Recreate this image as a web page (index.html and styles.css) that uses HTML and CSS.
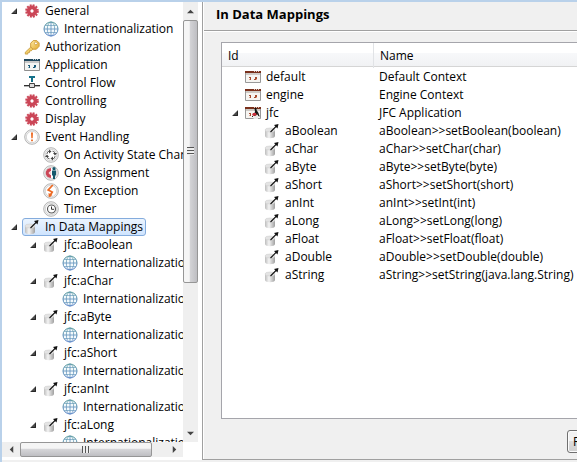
FILE: index.html
```
<!DOCTYPE html>
<html lang="en">
<head>
<meta charset="utf-8">
<title>In Data Mappings</title>
<link rel="stylesheet" href="styles.css">
</head>
<body>
<svg class="sprite" aria-hidden="true">
  <defs>
    <linearGradient id="globe-line" x1="0" y1="0" x2="0" y2="1"><stop offset="0" stop-color="#55979c"/><stop offset="1" stop-color="#5a84c8"/></linearGradient>
    <linearGradient id="metal" x1="0" y1="0" x2="1" y2="0"><stop offset="0" stop-color="#bdbdbd"/><stop offset=".4" stop-color="#f4f4f4"/><stop offset="1" stop-color="#a0a0a0"/></linearGradient>
    <linearGradient id="gold" x1="0" y1="0" x2="1" y2="1"><stop offset="0" stop-color="#ffeaa0"/><stop offset="1" stop-color="#e2a92e"/></linearGradient>
    <symbol id="gear" viewBox="0 0 16 16">
      <circle cx="8" cy="8" r="5.8" fill="none" stroke="#cb4657" stroke-width="2" stroke-dasharray="1.9 1.137"/>
      <circle cx="8" cy="8" r="3.4" fill="none" stroke="#cb4657" stroke-width="4"/>
      <circle cx="8" cy="8" r="1.5" fill="#fff"/>
    </symbol>
    <symbol id="globe" viewBox="0 0 16 16">
      <circle cx="8" cy="8" r="7" fill="#f4fafc" stroke="url(#globe-line)"/>
      <path d="M2.2 4.5h11.6M2.2 11.5h11.6" fill="none" stroke="#6d9fbd" stroke-width=".7"/>
      <ellipse cx="8" cy="8" rx="3.7" ry="7" fill="none" stroke="url(#globe-line)" stroke-width=".7"/>
      <path d="M1 8h14M8 1v14" stroke="#5a8ebb" stroke-width=".8"/>
    </symbol>
    <symbol id="key" viewBox="0 0 16 16">
      <path d="M7.2 7.7 1.3 13.2v1.9h2.5v-1.5h1.7v-1.7h1.7l2-2z" fill="#f5cf6a" stroke="#c3973a" stroke-width=".8"/>
      <path d="M9.2 1.6h3.6l2.3 2.3v3.4l-2.7 2.9H9L6.7 8V4.2z" fill="url(#gold)" stroke="#cf9c3a"/>
      <circle cx="11.9" cy="4.4" r="1.4" fill="#fff" stroke="#c58f2d" stroke-width=".7"/>
    </symbol>
    <symbol id="app" viewBox="0 0 16 16">
      <path d="M.5 2.5h15v11H.5z" fill="#f4f4f2" stroke="#8f8f8f"/>
      <path d="M0 2h16v2H0z" fill="#20475c"/>
      <path d="M9 2h1v1H9zM11 2h1v1h-1zM13 2h1v1h-1z" fill="#b7cbd4"/>
      <path d="M1 4h14v2H1z" fill="#c7c7c7"/>
      <path d="M4 8h2v1H4zM5 9h1v2H5zM10 8h2v2h-2zM9 10h2v1H9z" fill="#1b5a78"/>
      <path d="M4 10h1v1H4zM11 10h1v1h-1z" fill="#89b4c8"/>
    </symbol>
    <symbol id="context" viewBox="0 0 16 16">
      <path d="M.5 2.500h15v11H.5z" fill="#f6f5f2" stroke="#999"/>
      <path d="M0 2h16v2H0z" fill="#7a301b"/>
      <path d="M9 2h1v1H9zM11 2h1v1h-1zM13 2h1v1h-1z" fill="#dec4bb"/>
      <path d="M1 4h14v2H1z" fill="#cfcac5"/>
      <path d="M4 8h2v1H4zM5 9h1v2H5zM10 8h2v2h-2zM9 10h2v1H9z" fill="#a64b2d"/>
      <path d="M4 10h1v1H4zM11 10h1v1h-1z" fill="#e0a58f"/>
    </symbol>
    <symbol id="java" viewBox="0 0 16 16">
      <use href="#context"/>
      <path d="M9.500 3h2v2l2 3 1 4-2-2-.5-1.500-2 2.500-2-1 2-3z" fill="#151515"/>
      <path d="M8 8h3v2l-2 1-2-1z" fill="#c92c3c"/>
      <path d="M8.500 11.500 13 10v4H8.500z" fill="#e9e9e9"/>
      <path d="M13 9l1 2M7 12l1-1" stroke="#222"/>
    </symbol>
    <symbol id="flow" viewBox="0 0 16 16">
      <path d="M5 1h6v2H9v4H7V3H5z" fill="#14718a"/>
      <path d="M0 10h16v1H0z" fill="#303030"/>
      <path d="M5.500 8.500h5v4h-5z" fill="#ddd" stroke="#444"/>
      <path d="M0 11.500h5M11 11.500h5" stroke="#b5b5b5"/>
    </symbol>
    <symbol id="ring" viewBox="0 0 16 16">
      <circle cx="8" cy="8" r="7.300" fill="#f1f1f1" stroke="#b5b5b5" stroke-width="1"/>
      <circle cx="8" cy="8" r="5.700" fill="#fff" stroke="#ccc" stroke-width=".8"/>
    </symbol>
    <symbol id="event" viewBox="0 0 16 16">
      <use href="#ring"/><path d="M7 3.500h2L8.700 9.300H7.300zM7.100 10.500h1.800v1.800H7.100z" fill="#ec6a24"/>
    </symbol>
    <symbol id="state" viewBox="0 0 16 16">
      <use href="#ring"/>
      <path d="M3.800 7 5 4.500h1.500M9.500 4.200 11.500 5v1.500M12.200 9 11 11.500H9.500M6.500 11.800 4.500 11V9.500" fill="none" stroke="#666" stroke-width="1"/>
      <path d="M6 2.500l2.500 2L6 6.500zM10 6h4l-2 2.500zM10 9.500l-2.500 2 2.500 2zM2 10h4L4 7.500z" fill="#444"/>
    </symbol>
    <symbol id="assign" viewBox="0 0 16 16">
      <use href="#ring"/>
      <path d="M8 3C1 3 1 13 8 13v-3C6 10 6 6 8 6z" fill="#cb4657"/>
      <circle cx="7" cy="8" r="1.300" fill="#f5d0d4"/>
      <circle cx="11" cy="3.700" r="1.600" fill="#16586c"/><path d="M9 5.500h4v5h-1V14h-2v-3.500H9z" fill="#16586c"/>
    </symbol>
    <symbol id="exception" viewBox="0 0 16 16">
      <use href="#ring"/><path d="M9.800 2 5.200 7l4 2-2.700 4.500" fill="none" stroke="#ec6a24" stroke-width="1.800"/><path d="M5.500 10l.3 4.300L9.500 12z" fill="#ec6a24"/>
    </symbol>
    <symbol id="timer" viewBox="0 0 16 16">
      <use href="#ring"/><circle cx="8.500" cy="8" r="4" fill="#fff" stroke="#555" stroke-width="1.100"/><path d="M8.500 5.500V8.300H11" fill="none" stroke="#333"/>
    </symbol>
    <symbol id="data" viewBox="0 0 16 16">
      <path d="M1 7v6c0 3 10 3 10 0V7z" fill="url(#metal)"/>
      <ellipse cx="6" cy="7" rx="5" ry="2" fill="#e3e3e3" stroke="#d0d0d0" stroke-width=".6"/>
      <path d="M6.500 9 12.500 3" stroke="#111" stroke-width="1.100"/>
      <path d="M10 2 14.500 1 13.500 5.500z" fill="#111"/>
    </symbol>
    <symbol id="open" viewBox="0 0 10 18"><path d="M7 6v6H1z" fill="#4a4a4a"/><path d="M6.500 7.300v4.200H2.300" fill="none" stroke="#262626"/></symbol>
  </defs>
</svg>

<main class="editor">
  <nav class="outline" aria-label="Outline">
    <ul class="tree">
      <li><div class="row"><svg class="toggle"><use href="#open"/></svg><span class="label"><svg class="icon"><use href="#gear"/></svg>General</span></div>
        <ul><li><div class="row"><span class="toggle"></span><span class="label"><svg class="icon"><use href="#globe"/></svg>Internationalization</span></div></li></ul></li>
      <li><div class="row"><span class="toggle"></span><span class="label"><svg class="icon"><use href="#key"/></svg>Authorization</span></div></li>
      <li><div class="row"><span class="toggle"></span><span class="label"><svg class="icon"><use href="#app"/></svg>Application</span></div></li>
      <li><div class="row"><span class="toggle"></span><span class="label"><svg class="icon"><use href="#flow"/></svg>Control Flow</span></div></li>
      <li><div class="row"><span class="toggle"></span><span class="label"><svg class="icon"><use href="#gear"/></svg>Controlling</span></div></li>
      <li><div class="row"><span class="toggle"></span><span class="label"><svg class="icon"><use href="#gear"/></svg>Display</span></div></li>
      <li><div class="row"><svg class="toggle"><use href="#open"/></svg><span class="label"><svg class="icon"><use href="#event"/></svg>Event Handling</span></div>
        <ul>
          <li><div class="row"><span class="toggle"></span><span class="label"><svg class="icon"><use href="#state"/></svg>On Activity State Change</span></div></li>
          <li><div class="row"><span class="toggle"></span><span class="label"><svg class="icon"><use href="#assign"/></svg>On Assignment</span></div></li>
          <li><div class="row"><span class="toggle"></span><span class="label"><svg class="icon"><use href="#exception"/></svg>On Exception</span></div></li>
          <li><div class="row"><span class="toggle"></span><span class="label"><svg class="icon"><use href="#timer"/></svg>Timer</span></div></li>
        </ul></li>
      <li><div class="row"><svg class="toggle"><use href="#open"/></svg><span class="label selected"><svg class="icon"><use href="#data"/></svg>In Data Mappings</span></div>
        <ul>
          <li><div class="row"><svg class="toggle"><use href="#open"/></svg><span class="label"><svg class="icon"><use href="#data"/></svg>jfc:aBoolean</span></div>
            <ul><li><div class="row"><span class="toggle"></span><span class="label"><svg class="icon"><use href="#globe"/></svg>Internationalization</span></div></li></ul></li>
          <li><div class="row"><svg class="toggle"><use href="#open"/></svg><span class="label"><svg class="icon"><use href="#data"/></svg>jfc:aChar</span></div>
            <ul><li><div class="row"><span class="toggle"></span><span class="label"><svg class="icon"><use href="#globe"/></svg>Internationalization</span></div></li></ul></li>
          <li><div class="row"><svg class="toggle"><use href="#open"/></svg><span class="label"><svg class="icon"><use href="#data"/></svg>jfc:aByte</span></div>
            <ul><li><div class="row"><span class="toggle"></span><span class="label"><svg class="icon"><use href="#globe"/></svg>Internationalization</span></div></li></ul></li>
          <li><div class="row"><svg class="toggle"><use href="#open"/></svg><span class="label"><svg class="icon"><use href="#data"/></svg>jfc:aShort</span></div>
            <ul><li><div class="row"><span class="toggle"></span><span class="label"><svg class="icon"><use href="#globe"/></svg>Internationalization</span></div></li></ul></li>
          <li><div class="row"><svg class="toggle"><use href="#open"/></svg><span class="label"><svg class="icon"><use href="#data"/></svg>jfc:anInt</span></div>
            <ul><li><div class="row"><span class="toggle"></span><span class="label"><svg class="icon"><use href="#globe"/></svg>Internationalization</span></div></li></ul></li>
          <li><div class="row"><svg class="toggle"><use href="#open"/></svg><span class="label"><svg class="icon"><use href="#data"/></svg>jfc:aLong</span></div>
            <ul><li><div class="row"><span class="toggle"></span><span class="label"><svg class="icon"><use href="#globe"/></svg>Internationalization</span></div></li></ul></li>
        </ul></li>
    </ul>
    <div class="scroll vertical">
      <button class="arrow" type="button" aria-label="Scroll up"><svg viewBox="0 0 8 8"><path d="M0 6l4-4 4 4z"/></svg></button>
      <div class="track"><div class="thumb"><span class="grip"></span></div></div>
      <button class="arrow" type="button" aria-label="Scroll down"><svg viewBox="0 0 8 8"><path d="M0 2l4 4 4-4z"/></svg></button>
    </div>
    <div class="scroll horizontal">
      <button class="arrow" type="button" aria-label="Scroll left"><svg viewBox="0 0 8 8"><path d="M6 0L2 4l4 4z"/></svg></button>
      <div class="track"><div class="thumb"><span class="grip"></span></div></div>
      <button class="arrow" type="button" aria-label="Scroll right"><svg viewBox="0 0 8 8"><path d="M2 0l4 4-4 4z"/></svg></button>
    </div>
  </nav>

  <section class="page">
    <h1 class="title">In Data Mappings</h1>
    <div class="viewer">
      <table class="mappings">
        <colgroup><col class="col-id"><col></colgroup>
        <thead><tr><th>Id</th><th>Name</th></tr></thead>
        <tbody>
          <tr><td><div class="row"><span class="toggle"></span><span class="label"><svg class="icon"><use href="#context"/></svg>default</span></div></td><td>Default Context</td></tr>
          <tr><td><div class="row"><span class="toggle"></span><span class="label"><svg class="icon"><use href="#context"/></svg>engine</span></div></td><td>Engine Context</td></tr>
          <tr><td><div class="row"><svg class="toggle"><use href="#open"/></svg><span class="label"><svg class="icon"><use href="#java"/></svg>jfc</span></div></td><td>JFC Application</td></tr>
          <tr class="child"><td><div class="row"><span class="toggle"></span><span class="label"><svg class="icon"><use href="#data"/></svg>aBoolean</span></div></td><td>aBoolean&gt;&gt;setBoolean(boolean)</td></tr>
          <tr class="child"><td><div class="row"><span class="toggle"></span><span class="label"><svg class="icon"><use href="#data"/></svg>aChar</span></div></td><td>aChar&gt;&gt;setChar(char)</td></tr>
          <tr class="child"><td><div class="row"><span class="toggle"></span><span class="label"><svg class="icon"><use href="#data"/></svg>aByte</span></div></td><td>aByte&gt;&gt;setByte(byte)</td></tr>
          <tr class="child"><td><div class="row"><span class="toggle"></span><span class="label"><svg class="icon"><use href="#data"/></svg>aShort</span></div></td><td>aShort&gt;&gt;setShort(short)</td></tr>
          <tr class="child"><td><div class="row"><span class="toggle"></span><span class="label"><svg class="icon"><use href="#data"/></svg>anInt</span></div></td><td>anInt&gt;&gt;setInt(int)</td></tr>
          <tr class="child"><td><div class="row"><span class="toggle"></span><span class="label"><svg class="icon"><use href="#data"/></svg>aLong</span></div></td><td>aLong&gt;&gt;setLong(long)</td></tr>
          <tr class="child"><td><div class="row"><span class="toggle"></span><span class="label"><svg class="icon"><use href="#data"/></svg>aFloat</span></div></td><td>aFloat&gt;&gt;setFloat(float)</td></tr>
          <tr class="child"><td><div class="row"><span class="toggle"></span><span class="label"><svg class="icon"><use href="#data"/></svg>aDouble</span></div></td><td>aDouble&gt;&gt;setDouble(double)</td></tr>
          <tr class="child"><td><div class="row"><span class="toggle"></span><span class="label"><svg class="icon"><use href="#data"/></svg>aString</span></div></td><td>aString&gt;&gt;setString(java.lang.String)</td></tr>
        </tbody>
      </table>
    </div>
    <div class="actions"><button class="push" type="button">Restore</button></div>
  </section>
</main>
</body>
</html>
```
FILE: styles.css
```
* { box-sizing: border-box; }

body {
  margin: 0;
  background: #f0f0f0;
  color: #000;
  font: 12px/18px "Open Sans", "Noto Sans", sans-serif;
}

.sprite { position: absolute; width: 0; height: 0; }

.editor {
  display: grid;
  grid-template-columns: 200px minmax(0, 1fr);
  height: 100vh;
  overflow: hidden;
  border-top: 2px solid #b9d1ea;
  border-left: 2px solid #b9d1ea;
}

/* Outline tree with its scrollbars */
.outline {
  display: grid;
  grid-template: minmax(0, 1fr) 15px / minmax(0, 1fr) 15px;
  min-height: 0;
  padding-right: 4px;
  margin-bottom: 2px;
  border-bottom: 3px solid #fff;
  background: #fff;
}

.tree, .tree ul { margin: 0; padding: 0; list-style: none; }
.tree { overflow: hidden; padding-left: 8px; }
.tree ul { padding-left: 19px; }

.row { display: flex; height: 18px; white-space: nowrap; }
.toggle { flex: none; width: 10px; height: 18px; margin-right: 2px; }
.icon { flex: none; width: 16px; height: 16px; }

.label {
  display: flex;
  align-items: center;
  gap: 5px;
  padding: 0 2px 0 1px;
  border: 1px solid transparent;
  border-radius: 3px;
  line-height: 16px;
}

.selected {
  border-color: #84acdd;
  background: linear-gradient(#ebf4fe, #cfe4fe);
}

.scroll { display: flex; background: #efefef; }
.vertical { flex-direction: column; }
.track { flex: 1; min-width: 0; min-height: 0; }

.arrow {
  display: grid;
  place-items: center;
  flex: none;
  width: 18px;
  height: 15px;
  padding: 0;
  border: 0;
  background: none;
}
.arrow svg { width: 7px; height: 7px; fill: #444; }
.vertical .arrow { width: 15px; height: 18px; }

.thumb {
  display: grid;
  place-items: center;
  border: 1px solid #969696;
  border-radius: 2px;
}
.vertical .thumb { height: 65%; background: linear-gradient(90deg, #f5f5f5 40%, #d2d2d5 50%, #bebec2); }
.horizontal .thumb { width: 91%; height: 15px; background: linear-gradient(#f5f5f5 40%, #d5d5d8 50%, #bebec2); }
.vertical .grip { width: 7px; height: 8px; background: repeating-linear-gradient(#555 0 1px, #eee 1px 3px); }
.horizontal .grip { width: 8px; height: 7px; background: repeating-linear-gradient(90deg, #555 0 1px, #eee 1px 3px); }

/* Detail page */
.page {
  display: flex;
  flex-direction: column;
  min-width: 0;
  margin-bottom: 2px;
  border-bottom: 1px solid #a0a0a0;
  border-left: 1px solid #a0a0a0;
  background: #f0f0f0;
  box-shadow: inset 1px 0 #fff;
}

.title {
  flex: none;
  height: 29px;
  margin: 0 0 11px 1px;
  padding: 0 12px;
  border-bottom: 1px solid #a0a0a0;
  box-shadow: 0 1px #fff;
  font-size: 13px;
  line-height: 25px;
}

.viewer {
  flex: 1;
  min-height: 0;
  overflow: hidden;
  margin-left: 18px;
  border: solid #a5a5ab;
  border-width: 1px 0 1px 1px;
  background: #fff;
}

.mappings { width: 100%; border-collapse: collapse; table-layout: fixed; }
.col-id { width: 152px; }

.mappings th {
  height: 25px;
  padding: 0 6px;
  background: linear-gradient(#fff 10px, #f7f8fa 10px, #f1f2f4 23px, #d5d5d5 23px, #d5d5d5 24px, #fff 24px);
  font-weight: normal;
  text-align: left;
}
.mappings th:first-child { box-shadow: inset -1px 0 #e1e3e6; }
.mappings td { height: 18px; padding: 0 5px; white-space: nowrap; }
.mappings td:first-child { padding: 0 0 0 9px; }
.mappings .child td:first-child { padding-left: 28px; }

.actions {
  display: flex;
  flex: none;
  height: 40px;
  padding: 11px 0 6px 364px;
}

.push {
  flex: none;
  height: 23px;
  padding: 0 5px;
  border: 1px solid #707070;
  border-radius: 3px;
  background: linear-gradient(#f2f2f2 50%, #dcdcdc 50%, #cfcfcf);
  box-shadow: inset 0 0 0 1px #fcfcfc;
  font: inherit;
}
```
